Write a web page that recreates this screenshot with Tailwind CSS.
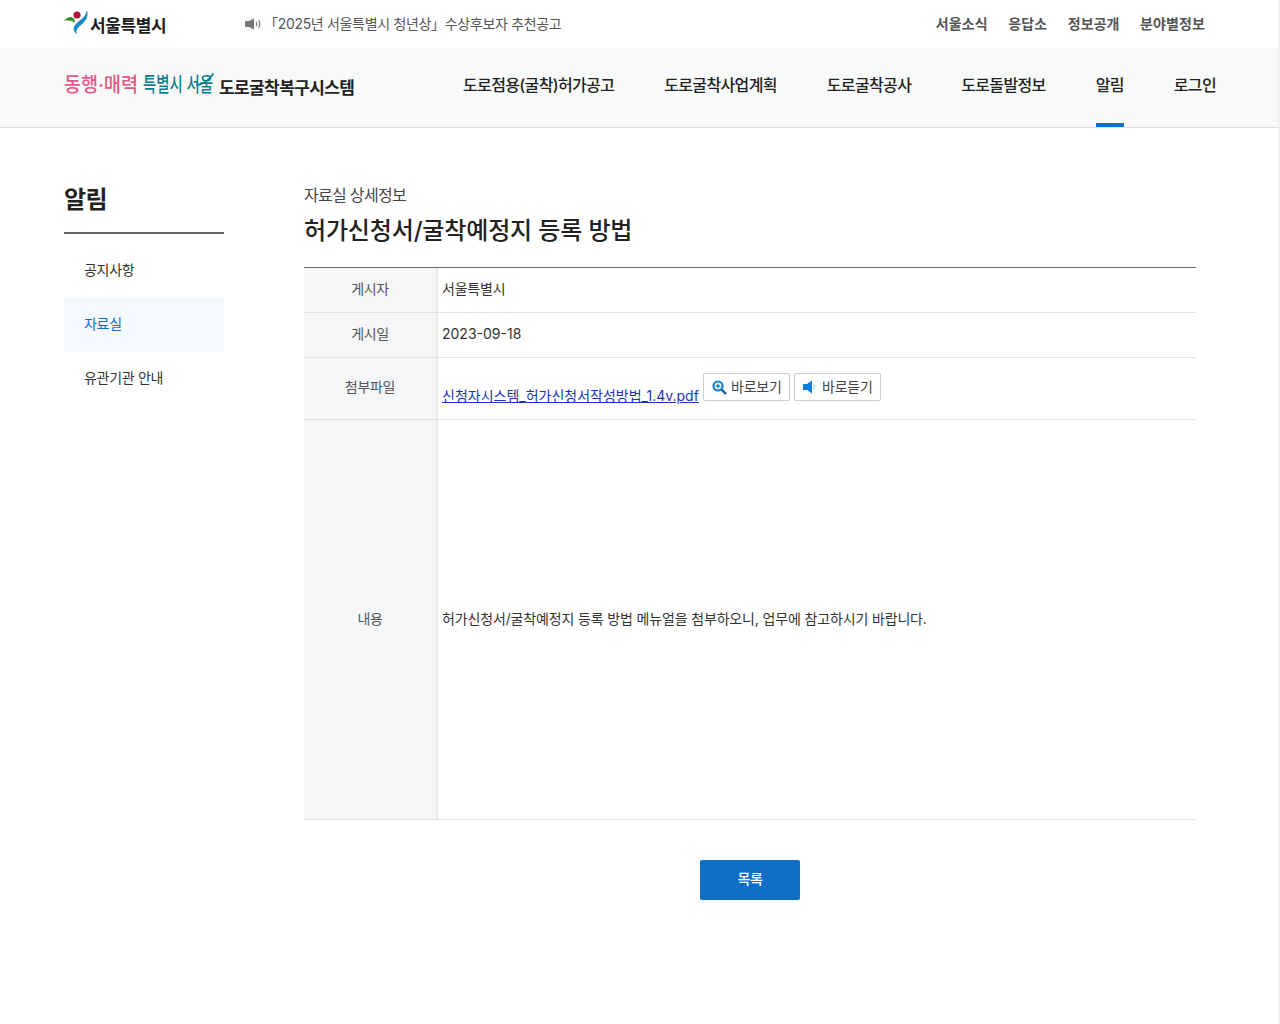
<!DOCTYPE html>
<html lang="ko">
  <head>
    <meta charset="UTF-8" />
    <meta name="viewport" content="width=device-width, initial-scale=1.0" />
    <title>도로굴착복구시스템</title>
    <script src="https://cdn.jsdelivr.net/npm/@tailwindcss/browser@4"></script>
  </head>
  <body class="bg-white text-[#222] font-['Inter','Noto_Sans_CJK_KR',sans-serif]">
    <div class="h-[1024px] border-r-2 border-[#f1f1f1] overflow-hidden">
      <!-- top bar -->
      <div class="h-12 flex items-center pl-16 pr-[73px]">
        <a class="flex items-center w-[181px]">
          <svg class="w-[25px] h-[26px] -mt-[4px]" viewBox="0 0 25 26">
            <circle cx="13" cy="6" r="3.600" fill="#b5123e" />
            <path d="M0 12C3 8 7 6.500 10 9.500C11 11 11 13 10.500 14C8 11.500 4 11 0 12Z" fill="#3f8f2f" />
            <path d="M23 1C25 7 22 12 17 16C14 18.500 11 21 13 25.500C8 22 9 16.500 14 13C18 10 22 7 23 1Z" fill="#1a87c9" />
          </svg>
          <span class="ml-[1px] text-[17px] font-bold tracking-[-0.4px] text-[#1d1d1d] mt-[5px]">서울특별시</span>
        </a>
        <div class="flex items-center text-sm text-[#555] tracking-[-0.32px]">
          <svg class="w-[17px] h-[12px] mr-[3px]" viewBox="0 0 17 12">
            <path d="M0 3H4L9 0.500V11.500L4 9H0Z" fill="#777" />
            <path d="M11 3.500Q12.500 6 11 8.500M13.500 2Q16 6 13.500 10" fill="none" stroke="#777" stroke-width="1.200" />
          </svg>
          <span class="-ml-[1px]">「2025년 서울특별시 청년상」수상후보자 추천공고</span>
        </div>
        <nav class="ml-auto flex gap-[20.5px] text-sm font-semibold text-[#555] tracking-[0.1px]">
          <a>서울소식</a>
          <a>응답소</a>
          <a>정보공개</a>
          <a>분야별정보</a>
        </nav>
      </div>

      <!-- main header -->
      <header class="h-20 bg-[#f8f9f9] border-b border-[#dfdfdf] flex pl-16 pr-[62px]">
        <div class="flex items-center h-[74px] whitespace-nowrap">
          <div class="w-[78px] h-7 relative">
            <span class="block origin-left scale-x-[0.93] text-[20px] leading-7 font-medium text-[#e8578a]">동행·매력</span>
          </div>
          <div class="w-[77px] h-7 relative">
            <span class="block ml-[1px] origin-left scale-x-[0.72] text-[20px] leading-7 font-medium text-[#0b7f8c]">특별시 서울</span>
            <svg class="absolute left-[52px] top-[1px] w-[20px] h-[20px]" viewBox="0 0 20 20">
              <path d="M3 13C9 12 15 8 19 2" fill="none" stroke="#0b7f8c" stroke-width="1.800" stroke-linecap="round" />
            </svg>
          </div>
          <span class="text-[17px] font-bold text-[#222] tracking-[-0.6px] mt-[8px]">도로굴착복구시스템</span>
        </div>
        <nav class="ml-auto flex gap-[50px] text-base font-medium text-[#222] tracking-[-0.65px]">
          <a class="h-full pt-[25px]">도로점용(굴착)허가공고</a>
          <a class="h-full pt-[25px]">도로굴착사업계획</a>
          <a class="h-full pt-[25px]">도로굴착공사</a>
          <a class="h-full pt-[25px]">도로돌발정보</a>
          <a class="h-full pt-[25px] border-b-4 border-[#0f6fc6]">알림</a>
          <a class="h-full pt-[25px]">로그인</a>
        </nav>
      </header>

      <!-- body -->
      <main class="flex pl-16 pr-[82px] pt-[52px]">
        <aside class="w-40 shrink-0">
          <h2 class="text-2xl font-semibold text-[#222] h-[54px] border-b-2 border-[#666] leading-10 tracking-[-0.5px]">알림</h2>
          <ul class="mt-[10px] text-sm text-[#333] tracking-[-0.3px]">
            <li class="h-[54px] flex items-center px-5 pb-[3px]">공지사항</li>
            <li class="h-[54px] flex items-center px-5 pb-[3px] bg-[#f3f9fe] text-[#0f6fc6]">자료실</li>
            <li class="h-[54px] flex items-center px-5 pb-[3px]">유관기관 안내</li>
          </ul>
        </aside>

        <section class="ml-20 flex-1">
          <p class="text-base leading-[30px] text-[#444] tracking-[-0.7px]">자료실 상세정보</p>
          <h1 class="text-2xl font-medium leading-[42px] text-[#222] tracking-[-0.15px]">허가신청서/굴착예정지 등록 방법</h1>

          <div class="mt-[15px] border-t border-[#666] text-sm text-[#333]">
            <div class="flex h-[45px] border-b border-[#dfe1e2]">
              <div class="w-[134px] shrink-0 bg-[#f4f6f7] border-r-2 border-[#e8ebec] flex items-center justify-center pb-[3px] text-[#555] tracking-[-0.3px]">게시자</div>
              <div class="flex items-center pl-1 pb-[3px] tracking-[-0.2px]">서울특별시</div>
            </div>
            <div class="flex h-[45px] border-b border-[#dfe1e2]">
              <div class="w-[134px] shrink-0 bg-[#f4f6f7] border-r-2 border-[#e8ebec] flex items-center justify-center pb-[3px] text-[#555] tracking-[-0.3px]">게시일</div>
              <div class="flex items-center pl-1 pb-[3px]">2023-09-18</div>
            </div>
            <div class="flex h-[62px] border-b border-[#dfe1e2]">
              <div class="w-[134px] shrink-0 bg-[#f4f6f7] border-r-2 border-[#e8ebec] flex items-center justify-center pb-[3px] text-[#555] tracking-[-0.3px]">첨부파일</div>
              <div class="flex items-start pl-1 pt-[15px]">
                <a class="text-[#1a34b8] underline tracking-[0px] mt-[10px] leading-[26px]">신청자시스템_허가신청서작성방법_1.4v.pdf</a>
                <button class="ml-1 h-7 w-[87px] flex items-center justify-center gap-1 bg-white border border-[#ccc] rounded-[2px] text-[#444] tracking-[-0.2px]">
                  <svg class="w-[15px] h-[15px] mt-[1px] ml-[1px]" viewBox="0 0 15 15">
                    <circle cx="6" cy="6" r="4.500" fill="#fff" stroke="#0f7fd6" stroke-width="2.200" />
                    <path d="M3.800 6H8.200M6 3.800V8.200" stroke="#0f7fd6" stroke-width="1.400" />
                    <path d="M9.500 9.500L14 14" stroke="#0f5fa6" stroke-width="2.400" />
                  </svg>
                  바로보기
                </button>
                <button class="ml-1 h-7 w-[87px] flex items-center justify-center gap-1 bg-white border border-[#ccc] rounded-[2px] text-[#444] tracking-[-0.2px]">
                  <svg class="w-[15px] h-[14px] ml-[1px]" viewBox="0 0 15 14">
                    <path d="M0 4H4L9 0.500V13.500L4 10H0Z" fill="#0f7fd6" />
                    <path d="M10.500 4Q13.500 7 10.500 10Z" fill="#9fd0f2" />
                  </svg>
                  바로듣기
                </button>
              </div>
            </div>
            <div class="flex h-[400px] border-b border-[#dfe1e2]">
              <div class="w-[134px] shrink-0 bg-[#f4f6f7] border-r-2 border-[#e8ebec] flex items-center justify-center pb-[1px] text-[#555] tracking-[-0.3px]">내용</div>
              <div class="flex items-center pl-1 pb-[1px] tracking-[-0.15px]">허가신청서/굴착예정지 등록 방법 메뉴얼을 첨부하오니, 업무에 참고하시기 바랍니다.</div>
            </div>
          </div>

          <div class="mt-10 flex justify-center">
            <button class="w-[100px] h-10 rounded-[2px] bg-[#0f6fc6] text-white text-sm font-medium pb-[2px] tracking-[-0.3px]">목록</button>
          </div>
        </section>
      </main>
    </div>
  </body>
</html>
